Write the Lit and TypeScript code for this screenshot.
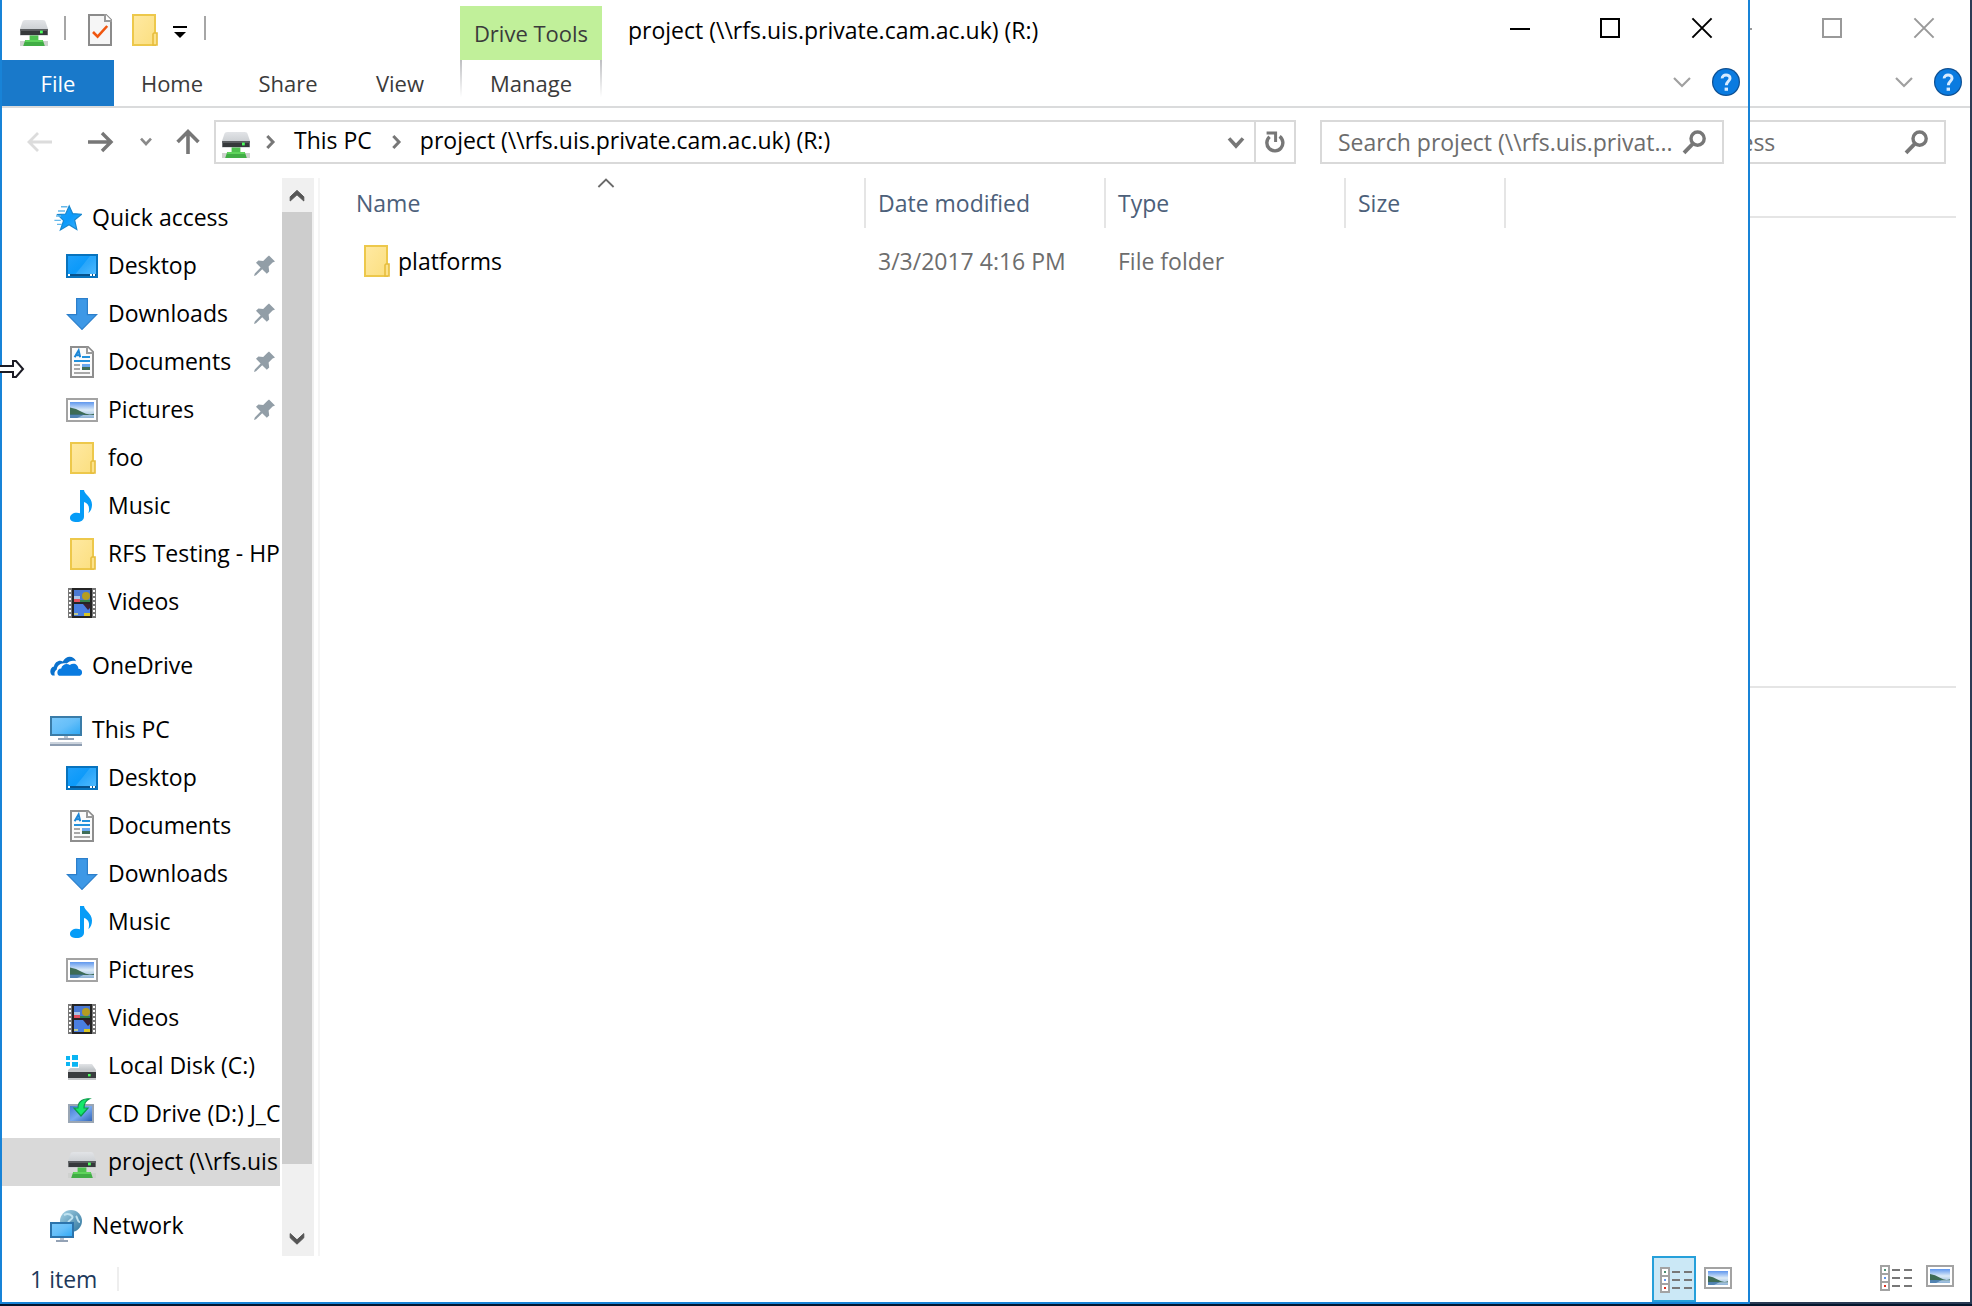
import { LitElement, html, svg, css } from "lit";
import { customElement, property } from "lit/decorators.js";

const DRIVE_NAME = "project (\\\\rfs.uis.private.cam.ac.uk) (R:)";
const SEARCH_HINT = "Search project (\\\\rfs.uis.privat...";

const photo = (x: number, y: number, w: number, h: number) => svg`
  <rect x=${x} y=${y} width=${w} height=${h} fill="url(#sky)"/>
  <path d="M${x} ${y + h * 0.35}q${w * 0.25} ${h * 0.05} ${w * 0.5} ${h * 0.28}t${w * 0.5} ${h * 0.1}v${h * 0.08}H${x}z" fill="#3d6b55"/>
  <path d="M${x} ${y + h * 0.78}H${x + w * 0.6}L${x + w * 0.3} ${y + h}H${x}z" fill="#3f74a8" opacity=".8"/>`;

const ICONS: Record<string, unknown> = {
  drive: svg`
    <rect x="1" y="13.5" width="14" height="2.500" fill="#cfd1cf"/>
    <rect x="5.800" y="10.500" width="4.400" height="4" fill="#4fc14f"/>
    <path d="M3.600 13h8.800l1 3H2.600z" fill="#41ad45"/><rect x="3.600" y="13" width="8.800" height="1" fill="#5fd45c"/>
    <path d="M3.600 3h8.800c.8 0 1.200.4 1.500 1.200L15 7.500v3.300H1V7.500l1.100-3.300C2.400 3.400 2.800 3 3.600 3z" fill="url(#metal)"/>
    <rect x="1.200" y="7.500" width="13.600" height="3" fill="#36393b"/>
    <rect x="1.200" y="7.500" width="13.600" height="1" fill="#5a5d60"/>
    <rect x="11" y="8.300" width="1.400" height="1.400" fill="#4dff5e"/>`,
  check: svg`<path d="M2.5.5H11L13.5 3v12.5h-11z" fill="#f6f6f6" stroke="#8b8b8b"/>
    <path d="M10.5 0v3.5H14" fill="#fff" stroke="#9a9a9a"/>
    <path d="M4.5 9l2.3 2.3L11.6 6" fill="none" stroke="#f0560f" stroke-width="1.3"/>`,
  folder: svg`<rect x="2.500" y=".5" width="11" height="15" fill="url(#gold)" stroke="#edc84b"/>
    <path d="M13 9.500h1.500v6H12.500V10z" fill="#fce28a" stroke="#e6bd3d" stroke-width=".8"/>`,
  star: svg`<path d="M9.600 2l1.700 3.800 4.500.3-3.500 2.900 1.100 4.800-3.900-2.400L5.200 14l1.600-4.700-3-3 4-.3z" fill="url(#blue)" stroke="#1887cf" stroke-width=".6"/>
    <path d="M5.500 2.400h3.200M4 4.500h3.500M3 7h2.500M2.200 9.200h3.200M3.500 11.200h2.500" stroke="#65b8ea" stroke-width=".7"/>`,
  desktop: svg`<rect x=".5" y="2.5" width="15" height="11" fill="url(#blue)" stroke="#0873bd"/>
    <path d="M4 13L12 3h3v10z" fill="#fff" opacity=".12"/>
    <path d="M1 12.5h14" stroke="#07528c"/><path d="M1 12.5h1M12 12.5h1M13.5 12.5h1" stroke="#fff"/>`,
  download: svg`<path d="M5.3.3h5.400v8h4.600L8 15.700.700 8.300h4.600z" fill="#3d98e6" stroke="#2c7fcb" stroke-width=".6"/>`,
  document: svg`<path d="M2.5.5H11L13.5 3v12.5h-11z" fill="#fbfbfb" stroke="#8e8e8e"/>
    <path d="M10.5.5v3h3" fill="#fff" stroke="#9a9a9a"/>
    <path d="M4.3 5.6l2-3.4.8 3.4M5 4.6h2" stroke="#1c86d6" fill="none"/>
    <path d="M8 5.5h4M4 7.5h8" stroke="#2391dc"/><path d="M4 9.5h3M4 11.5h3M4 13.5h8" stroke="#a8a8a8"/>
    <rect x="8" y="9" width="4" height="1.5" fill="#6aa9f0"/><rect x="8" y="10.5" width="4" height="1.5" fill="#3f6e58"/>`,
  picture: svg`<rect x=".5" y="2.5" width="15" height="11" fill="#fff" stroke="#a3a3a3"/>${photo(2, 4, 12, 8)}`,
  pictureSmall: svg`<rect x="1.500" y="2.500" width="13" height="10" fill="#fff" stroke="#a3a3a3"/>${photo(3, 4, 10, 7)}`,
  music: svg`<path d="M7 0h2c.3 2.4 4 3.600 4 7.300 0 2-.6 3.200-1.800 4.300.9-3 0-5-2.200-5.600v7.200C9 15 7.500 16 5.300 16 3.400 16 2 15.300 2 14c0-1.600 1.500-2.600 3.400-2.600.6 0 1.100.1 1.600.2z" fill="#069cf7"/>`,
  video: svg`<rect x="1" y="1" width="14" height="15" fill="#777"/><rect x="3" y="1" width="10" height="15" fill="#242424"/>
    <path d="M2 2v14M14 2v14" stroke="#fff" stroke-dasharray="1 1"/>
    <rect x="4" y="2" width="8" height="6" fill="#4a78d2"/><rect x="4" y="9" width="8" height="6" fill="#4a7ee0"/>
    <rect x="4" y="5" width="3" height="1.500" fill="#a9c4e8"/><rect x="4" y="6.500" width="3" height="1.500" fill="#e0505e"/>
    <circle cx="10" cy="5" r="2" fill="#b59d20"/><rect x="7" y="7" width="5" height="1" fill="#35804a"/>
    <path d="M8.500 9H12v2l-1 1z" fill="#3b2030"/><rect x="4" y="13.500" width="2" height="1" fill="#bcc890"/><rect x="9" y="13.500" width="3" height="1.500" fill="#d8c626"/>`,
  cloud: svg`<path d="M1.200 12.700C-.6 11.500.1 8.600 2 8.300 2.200 6 4.700 4.800 6.400 5.700 8 2.400 12 2.700 13 5.600c-2-.6-3.600 0-4.600 1.200-3-.8-5 1-5 3-.9.6-1.500 1.700-1 2.900z" fill="#0a71cc"/>
    <path d="M4.600 12.900c-1.600-1-1-3.700 1-3.700.4-2.200 3-2.800 4.300-1.700 1.900-1.500 4.300-.3 4.300 1.900 2.300.1 2.300 3 .8 3.500z" fill="#0a7be0"/>`,
  computer: svg`<rect x=".5" y="1.500" width="15" height="9" fill="url(#sheen)" stroke="#3a7ca8"/>
    <rect x="7" y="11" width="2" height="1" fill="#b9c3cf"/><rect x="4" y="12" width="8" height="1" fill="#93a2b5"/>
    <rect x="0" y="14" width="16" height="1" fill="#cbd3dd"/><rect x="0" y="15" width="16" height="1" fill="#8e9db1"/>`,
  disk: svg`<path d="M0 3h2v2H0zM3 2.500h3V5H3zM0 6h2v2H0zM3 6h3v2.400H3z" fill="#0bb5f3"/>
    <path d="M6.500 7h6.500l2 3H1l1.200-1H6.500z" fill="url(#metal)"/><rect x="1" y="10" width="14" height="5" fill="#c6c8ca"/>
    <rect x="1" y="11" width="14" height="3" fill="#3a3d3f"/><rect x="11" y="12" width="1.300" height="1.200" fill="#4dff5e"/>`,
  disc: svg`<rect x="1.500" y="3.500" width="12" height="8.500" fill="url(#steel)" stroke="#9aa6b4"/>
    <path d="M11.800.4C9.500.2 6 1 6 5H4l3.500 4L11 5H9c0-2 .6-3.600 2.800-4.600z" fill="#14e86b" stroke="#0c9b4b" stroke-width=".6"/>`,
  network: svg`<circle cx="10.500" cy="5.500" r="5.500" fill="url(#globe)"/>
    <path d="M7 2.500c2-1 3-.5 4 .5s-1 2-2 3M13 3c1 1 .5 3 2 3" stroke="#bfe2f0" fill="none"/>
    <rect x=".5" y="6.500" width="11" height="7" fill="url(#sheen)" stroke="#2d74ac"/>
    <rect x="5" y="14" width="2" height="1" fill="#b9c3cf"/><rect x="3" y="15" width="6" height="1" fill="#93a2b5"/>`,
  pin: svg`<path d="M10.500 2.800l3 3-1.200.5-2 2 .3 2.400-1.200 1.200-2.300-2.300L4 12.600l-1 .4.400-1.200 2.900-3.100L4 6.400l1.200-1.200 2.400.3 2-2z" fill="#929ea7"/>`,
  details: svg`<path d="M.5 2.500h4v12h-4zM.5 6.500h4M.5 10.500h4" fill="#fff" stroke="#a3a3a3"/>
    <rect x="2" y="4" width="1" height="1" fill="#4e8f74"/><rect x="2" y="8" width="1" height="1" fill="#5f93e8"/><rect x="2" y="12" width="1" height="1" fill="#dd2f20"/>
    <path d="M6 4.500h4M12 4.500h4M6 8.500h4M12 8.500h4M6 12.500h4M12 12.500h4" stroke="#777"/>`,
  help: svg`<circle cx="8" cy="8" r="7" fill="#0d4f92"/><circle cx="8" cy="8" r="6.400" fill="#0a7be0"/>
    <path d="M6.100 6.200C6 4 10 3.900 10 6.100 10 7.600 8.200 7.700 8.200 9.600" fill="none" stroke="#d8ecff" stroke-width="1.500"/><rect x="7.300" y="10.800" width="1.700" height="1.600" fill="#d8ecff"/>`,
  back: svg`<path d="M14 8H3M7 3.500L2.500 8 7 12.500" fill="none" stroke="#dcdcdc" stroke-width="1.400"/>`,
  forward: svg`<path d="M2 8h11M9 3.500L13.500 8 9 12.500" fill="none" stroke="#777" stroke-width="1.700"/>`,
  up: svg`<path d="M8 14V3M2.800 8L8 2.800 13.200 8" fill="none" stroke="#777" stroke-width="1.800"/>`,
  smallDown: svg`<path d="M5.500 6.300L8 9l2.500-2.700" fill="none" stroke="#8a8a8a" stroke-width="1.300"/>`,
  down: svg`<path d="M4.500 6.200L8 10l3.500-3.800" fill="none" stroke="#777" stroke-width="1.800"/>`,
  thinDown: svg`<path d="M4 6l4 4 4-4" fill="none" stroke="#a0a0a0" stroke-width="1.100"/>`,
  thinUp: svg`<path d="M4.200 9.500L8 5.800l3.800 3.700" fill="none" stroke="#6a6a6a" stroke-width=".9"/>`,
  scrollUp: svg`<path d="M4.600 11V8.900L8 5.700l3.400 3.200V11L8 7.900z" fill="#555" stroke="#555" stroke-width=".5"/>`,
  scrollDown: svg`<path d="M4.600 5.300v2.100L8 10.600l3.400-3.200V5.300L8 8.400z" fill="#555" stroke="#555" stroke-width=".5"/>`,
  crumb: svg`<path d="M6.200 4L10 8l-3.800 4" fill="none" stroke="#777" stroke-width="2"/>`,
  refresh: svg`<path d="M10.300 5.200A4 4 0 1 1 5.300 5.400" fill="none" stroke="#777" stroke-width="1.700"/><path d="M3.800 3.500h4.500V8" fill="none" stroke="#777" stroke-width="1.500"/>`,
  search: svg`<circle cx="9.800" cy="6.300" r="3.300" fill="none" stroke="#777" stroke-width="1.700"/><path d="M7.600 8.700L3 13.400" stroke="#777" stroke-width="1.900"/>`,
  minimize: svg`<path d="M4 7.500h10" stroke="currentColor"/>`,
  maximize: svg`<rect x="3.500" y="2.500" width="9" height="9" fill="none" stroke="currentColor"/>`,
  close: svg`<path d="M3.200 2.200l9.600 9.600M12.800 2.200l-9.600 9.600" stroke="currentColor"/>`,
  menu: svg`<path d="M4.500 6.500h7" stroke="#000"/><path d="M5 9h6l-3 3z" fill="#000"/>`,
};

@customElement("explorer-icon")
export class ExplorerIcon extends LitElement {
  @property() name = "";
  static styles = css`
    :host { display: block; flex: none; width: 32px; height: 32px; }
    svg { display: block; width: 100%; height: 100%; }
  `;
  render() {
    return html`<svg viewBox="0 0 16 16" aria-hidden="true">
      <defs>
        <linearGradient id="metal" x2="0" y2="1"><stop stop-color="#e2e4e7"/><stop offset="1" stop-color="#bfc3c7"/></linearGradient>
        <linearGradient id="gold" x2="1" y2="1"><stop stop-color="#ffe9a2"/><stop offset="1" stop-color="#fbdf80"/></linearGradient>
        <linearGradient id="blue" x2="1" y2="1"><stop stop-color="#21a1fb"/><stop offset=".5" stop-color="#0c9afa"/><stop offset="1" stop-color="#3db4ff"/></linearGradient>
        <linearGradient id="sheen" x2="1" y2="1"><stop stop-color="#7cc9fb"/><stop offset=".5" stop-color="#66bff9"/><stop offset="1" stop-color="#2ba7f5"/></linearGradient>
        <linearGradient id="steel" x2="1" y2="1"><stop stop-color="#3d76cf"/><stop offset=".5" stop-color="#78aaf0"/><stop offset="1" stop-color="#2a5fb4"/></linearGradient>
        <linearGradient id="globe" x2="1" y2="1"><stop stop-color="#a7d3e6"/><stop offset="1" stop-color="#2f759d"/></linearGradient>
        <linearGradient id="sky" x2="0" y2="1"><stop stop-color="#5f97ee"/><stop offset=".5" stop-color="#dcebf7"/><stop offset="1" stop-color="#8db2d6"/></linearGradient>
      </defs>
      ${ICONS[this.name]}
    </svg>`;
  }
}

interface Place { label: string; icon: string; pinned?: boolean; selected?: boolean; }
interface Group { root: Place; children: Place[]; }

const GROUPS: Group[] = [
  {
    root: { label: "Quick access", icon: "star" },
    children: [
      { label: "Desktop", icon: "desktop", pinned: true },
      { label: "Downloads", icon: "download", pinned: true },
      { label: "Documents", icon: "document", pinned: true },
      { label: "Pictures", icon: "picture", pinned: true },
      { label: "foo", icon: "folder" },
      { label: "Music", icon: "music" },
      { label: "RFS Testing - HP", icon: "folder" },
      { label: "Videos", icon: "video" },
    ],
  },
  { root: { label: "OneDrive", icon: "cloud" }, children: [] },
  {
    root: { label: "This PC", icon: "computer" },
    children: [
      { label: "Desktop", icon: "desktop" },
      { label: "Documents", icon: "document" },
      { label: "Downloads", icon: "download" },
      { label: "Music", icon: "music" },
      { label: "Pictures", icon: "picture" },
      { label: "Videos", icon: "video" },
      { label: "Local Disk (C:)", icon: "disk" },
      { label: "CD Drive (D:) J_C", icon: "disc" },
      { label: "project (\\\\rfs.uis", icon: "drive", selected: true },
    ],
  },
  { root: { label: "Network", icon: "network" }, children: [] },
];

@customElement("app-root")
export class AppRoot extends LitElement {
  static styles = css`
    :host {
      display: block;
      font: 23px/32px "Open Sans", "Noto Sans", sans-serif;
      color: #000;
    }
    * { box-sizing: border-box; }
    button, input { font: inherit; color: inherit; border: 0; background: none; padding: 0; margin: 0; }
    button { display: flex; align-items: center; justify-content: center; }
    a { color: inherit; text-decoration: none; }
    ul { list-style: none; margin: 0; padding: 0; }

    .screen { position: relative; min-height: 100vh; background: #04152c; overflow: hidden; }
    .window { display: flex; flex-direction: column; background: #fff; position: absolute; top: 0; bottom: 2px; }
    .front { left: 0; right: 222px; border: solid #1883d7; border-width: 0 2px 2px; }
    .rear { left: 222px; right: 0; border: solid #2b3b55; border-width: 0 2px 2px 0; }

    .titlebar { display: flex; height: 60px; flex: none; }
    .quick { display: flex; align-items: center; width: 458px; padding-left: 16px; }
    .rule { width: 2px; height: 24px; background: #a6a6a6; margin: 0 18px 4px 14px; }
    .quick button + button { margin-left: 12px; }
    .quick .menu { margin-left: 4px; width: 32px; }
    .quick .menu ~ .rule { margin-left: 8px; }
    .context { display: flex; align-items: center; justify-content: center; width: 142px; margin-top: 6px; background: #c1f09a; color: #3b3b3b; font-size: 22px; }
    h1 { font: inherit; margin: 0 auto 0 26px; align-self: center; white-space: nowrap; }
    .caption { display: flex; margin-left: auto; }
    .caption button { width: 92px; }
    .rear .caption { color: #999; }

    .ribbon { display: flex; height: 48px; flex: none; border-bottom: 2px solid #dadbdc; color: #3b3b3b; font-size: 22px; }
    .tab { min-width: 116px; }
    .file { min-width: 112px; background: #1979ca; color: #fff; }
    .view { min-width: 108px; margin-right: 6px; }
    .manage { width: 142px; border: 2px solid; border-width: 0 2px; border-image: linear-gradient(#bcbdc0, #fff 80%) 1; }
    .tools { display: flex; align-items: center; gap: 12px; margin-left: auto; padding: 0 6px 2px 0; }

    .location { display: flex; flex: none; padding: 12px 24px 14px 8px; }
    .step { width: 60px; height: 44px; }
    .recent { width: 32px; }
    .parent { width: 52px; }
    .address { display: flex; flex: 1; height: 44px; border: 2px solid #d9d9d9; margin-right: 24px; align-items: center; padding-left: 4px; }
    .crumb { padding: 0 6px 4px 0; white-space: nowrap; }
    .address button { height: 40px; width: 40px; }
    .address .chev { margin: 0 12px 0 6px; width: 24px; height: 24px; }
    .address .end { margin-left: auto; width: 36px; }
    .address .reload { border-left: 2px solid #d9d9d9; width: 40px; }
    .search { display: flex; align-items: center; width: 404px; height: 44px; border: 2px solid #d9d9d9; padding: 0 12px 0 16px; }
    .search input { flex: 1; min-width: 0; height: 40px; outline: none; }
    .search input::placeholder { color: #6d6d6d; opacity: 1; }
    .rear .location { justify-content: flex-end; }

    .body { display: flex; flex: 1; min-height: 0; }
    .places { width: 278px; padding-top: 16px; overflow: hidden; }
    .group { margin-bottom: 16px; }
    .place { display: flex; align-items: center; gap: 10px; height: 48px; padding-left: 48px; white-space: nowrap; }
    .label { padding-bottom: 2px; }
    .child { padding-left: 64px; }
    .selected { background: #d9d9d9; }
    .pin { margin-left: auto; }
    .scroll { display: flex; flex-direction: column; width: 32px; margin-left: 2px; background: #f0f0f0; }
    .scroll button { height: 34px; width: 30px; flex: none; }
    .thumb { flex: 1; width: 30px; background: #cdcdcd; margin-bottom: 58px; }
    .files { flex: 1; min-width: 0; margin-left: 4px; border-left: 2px solid #f5f5f5; padding-left: 26px; }
    table { border-collapse: collapse; table-layout: fixed; width: 1160px; }
    .c-name { width: 520px; }
    .c-wide { width: 240px; }
    .c-size { width: 160px; }
    th { height: 50px; padding: 0 0 0 12px; text-align: left; font-weight: 400; color: #4c607a; box-shadow: inset -2px 0 #e5e5e5; position: relative; }
    th:first-child { padding-left: 10px; }
    .sort { position: absolute; left: 50%; top: -10px; margin-left: -16px; }
    td { height: 66px; padding: 0 0 0 12px; color: #6d6d6d; }
    td:first-child { padding-left: 14px; }
    .item { display: flex; align-items: center; gap: 6px; color: #000; }

    .status { display: flex; align-items: center; flex: none; height: 46px; padding: 0 14px 0 28px; color: #1e395b; }
    .count { padding-right: 20px; border-right: 2px solid #eee; line-height: 24px; }
    .modes { display: flex; align-items: center; margin-left: auto; gap: 6px; }
    .modes button { width: 32px; height: 46px; }
    .modes .on { width: 44px; background: #cbe8f6; border: 2px solid #26a0da; padding-left: 4px; }
    .rear .modes { gap: 12px; padding-bottom: 4px; }
    .pane { flex: 1; padding: 38px 14px 0 0; }
    .shelf { height: 470px; border-top: 2px solid #e5e5e5; }
    .shelf + .shelf { height: 2px; }
    .pointer { position: absolute; left: 0; top: 358px; width: 26px; height: 22px; }
  `;

  private place(p: Place, child: boolean) {
    return html`<a href="#" class="place ${child ? "child" : ""} ${p.selected ? "selected" : ""}">
      <explorer-icon name=${p.icon}></explorer-icon><span class="label">${p.label}</span>
      ${p.pinned ? html`<explorer-icon class="pin" name="pin"></explorer-icon>` : ""}
    </a>`;
  }

  private iconButton(label: string, icon: string, cls = "") {
    return html`<button class=${cls} aria-label=${label}><explorer-icon name=${icon}></explorer-icon></button>`;
  }

  private caption() {
    return html`<div class="caption">
      ${this.iconButton("Minimize", "minimize")}${this.iconButton("Maximize", "maximize")}${this.iconButton("Close", "close")}
    </div>`;
  }

  private tools() {
    return html`<div class="tools">${this.iconButton("Expand the ribbon", "thinDown")}${this.iconButton("Help", "help")}</div>`;
  }

  private search(hint: string) {
    return html`<label class="search">
      <input type="text" aria-label=${hint} placeholder=${hint} /><explorer-icon name="search"></explorer-icon>
    </label>`;
  }

  render() {
    return html`<main class="screen">
      <section class="window rear">
        <div class="titlebar">${this.caption()}</div>
        <div class="ribbon">${this.tools()}</div>
        <div class="location">${this.search("Search Quick access")}</div>
        <div class="pane"><div class="shelf"></div><div class="shelf"></div></div>
        <div class="status"><div class="modes">${this.iconButton("Details", "details")}${this.iconButton("Large icons", "pictureSmall")}</div></div>
      </section>

      <section class="window front">
        <header class="titlebar">
          <div class="quick">
            <explorer-icon name="drive"></explorer-icon>
            <span class="rule"></span>
            ${this.iconButton("Properties", "check")}${this.iconButton("New folder", "folder")}${this.iconButton("Customize toolbar", "menu", "menu")}
            <span class="rule"></span>
          </div>
          <div class="context">Drive Tools</div>
          <h1>${DRIVE_NAME}</h1>
          ${this.caption()}
        </header>
        <div class="ribbon">
          <button class="file">File</button>
          <button class="tab">Home</button>
          <button class="tab">Share</button>
          <button class="view">View</button>
          <button class="manage">Manage</button>
          ${this.tools()}
        </div>
        <div class="location">
          ${this.iconButton("Back", "back", "step")}${this.iconButton("Forward", "forward", "step")}
          ${this.iconButton("Recent locations", "smallDown", "step recent")}${this.iconButton("Up", "up", "step parent")}
          <div class="address">
            <explorer-icon name="drive"></explorer-icon>
            <explorer-icon class="chev" name="crumb"></explorer-icon>
            <a class="crumb" href="#">This PC</a>
            <explorer-icon class="chev" name="crumb"></explorer-icon>
            <a class="crumb" href="#">${DRIVE_NAME}</a>
            ${this.iconButton("Previous locations", "down", "end")}${this.iconButton("Refresh", "refresh", "reload")}
          </div>
          ${this.search(SEARCH_HINT)}
        </div>
        <div class="body">
          <nav class="places">
            ${GROUPS.map((g) => html`<div class="group">
              ${this.place(g.root, false)}
              <ul>${g.children.map((c) => html`<li>${this.place(c, true)}</li>`)}</ul>
            </div>`)}
          </nav>
          <div class="scroll">
            ${this.iconButton("Scroll up", "scrollUp")}
            <div class="thumb"></div>
            ${this.iconButton("Scroll down", "scrollDown")}
          </div>
          <div class="files">
            <table>
              <colgroup><col class="c-name" /><col class="c-wide" /><col class="c-wide" /><col class="c-size" /></colgroup>
              <thead><tr>
                <th scope="col">Name<explorer-icon class="sort" name="thinUp"></explorer-icon></th>
                <th scope="col">Date modified</th><th scope="col">Type</th><th scope="col">Size</th>
              </tr></thead>
              <tbody><tr>
                <td><a class="item" href="#"><explorer-icon name="folder"></explorer-icon>platforms</a></td>
                <td>3/3/2017 4:16 PM</td><td>File folder</td><td></td>
              </tr></tbody>
            </table>
          </div>
        </div>
        <footer class="status">
          <span class="count">1 item</span>
          <div class="modes">${this.iconButton("Details", "details", "on")}${this.iconButton("Large icons", "pictureSmall")}</div>
        </footer>
      </section>

      <svg class="pointer" viewBox="0 0 26 22" aria-hidden="true">
        <path d="M-2 8h15V3h3l7 8-7 8h-3v-5H-2z" fill="#fff" stroke="#1b1b24" stroke-width="2"/>
      </svg>
    </main>`;
  }
}
